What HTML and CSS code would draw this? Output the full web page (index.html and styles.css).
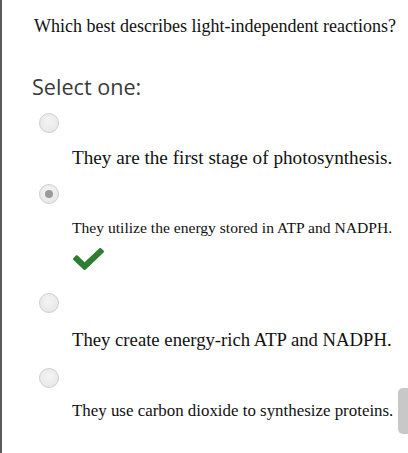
FILE: index.html
```html
<!DOCTYPE html>
<html>
<head>
<meta charset="utf-8">
<link rel="stylesheet" href="styles.css">
</head>
<body>
<div class="page">
  <p class="question">Which best describes light-independent reactions?</p>
  <p class="prompt">Select one:</p>
  <div class="option">
    <span class="radio"></span>
    <p class="answer a1">They are the first stage of photosynthesis.</p>
  </div>
  <div class="option">
    <span class="radio checked"></span>
    <p class="answer a2">They utilize the energy stored in ATP and NADPH.</p>
    <svg class="check" width="31" height="22" viewBox="0 66 512 380" preserveAspectRatio="none"><path fill="#2d7d32" d="M173.898 439.404l-166.4-166.4c-9.997-9.997-9.997-26.206 0-36.204l36.203-36.204c9.997-9.998 26.207-9.998 36.204 0L192 312.69 432.095 72.596c9.997-9.997 26.207-9.997 36.204 0l36.203 36.204c9.997 9.997 9.997 26.206 0 36.204l-294.4 294.401c-9.998 9.997-26.207 9.997-36.204-.001z"/></svg>
  </div>
  <div class="option">
    <span class="radio"></span>
    <p class="answer a3">They create energy-rich ATP and NADPH.</p>
  </div>
  <div class="option">
    <span class="radio"></span>
    <p class="answer a4">They use carbon dioxide to synthesize proteins.</p>
  </div>
  <div class="thumb"></div>
</div>
</body>
</html>
```
FILE: styles.css
```css
html, body {
  margin: 0;
  padding: 0;
  background: #fff;
}
.page {
  position: relative;
  height: 453px;
  box-sizing: border-box;
  border-left: 2px solid #5a5a5a;
  overflow: hidden;
  font-family: "Liberation Serif", "Times New Roman", serif;
  color: #111;
}
.question {
  margin: 16px 0 0 32px;
  font-size: 18px;
  line-height: 20px;
}
.prompt {
  margin: 37px 0 12px 30px;
  font-family: "Open Sans", sans-serif;
  font-size: 21.6px;
  line-height: 28px;
  color: #3a3a3a;
}
.option {
  display: flex;
  flex-direction: column;
  align-items: flex-start;
}
.radio {
  display: block;
  width: 18px;
  height: 18px;
  border-radius: 50%;
  border: 1px solid #cfcfcf;
  background: radial-gradient(circle at 50% 40%, #f4f4f4, #e4e4e4);
  margin-left: 37px;
  position: relative;
}
.radio.checked::after {
  content: "";
  position: absolute;
  left: 5px;
  top: 5px;
  width: 8px;
  height: 8px;
  border-radius: 50%;
  background: #9a9a9a;
}
.answer {
  margin: 0 0 0 70px;
  white-space: nowrap;
}
.a1 { font-size: 19.2px; line-height: 22px; margin-top: 14px; margin-bottom: 15px; }
.a2 { font-size: 15.6px; line-height: 18px; margin-top: 15px; }
.check { margin: 11px 0 0 71px; display: block; }
.a3 { font-size: 18.7px; line-height: 22px; margin-top: 16px; margin-bottom: 17px; }
.a4 { font-size: 16.9px; line-height: 20px; margin-top: 13px; }
.option:nth-child(5) { margin-top: 23px; }
.thumb {
  position: absolute;
  right: 0;
  top: 388px;
  width: 10px;
  height: 46px;
  border-radius: 5px 0 0 5px;
  background: #c8c8c8;
}
```
